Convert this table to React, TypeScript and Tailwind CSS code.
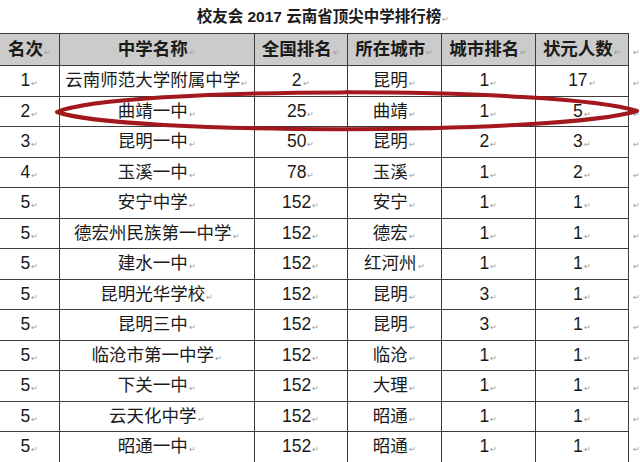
import React from 'react'

const rows: [string, string, string, string, string, string][] = [
  ['1', '云南师范大学附属中学', '2', '昆明', '1', '17'],
  ['2', '曲靖一中', '25', '曲靖', '1', '5'],
  ['3', '昆明一中', '50', '昆明', '2', '3'],
  ['4', '玉溪一中', '78', '玉溪', '1', '2'],
  ['5', '安宁中学', '152', '安宁', '1', '1'],
  ['5', '德宏州民族第一中学', '152', '德宏', '1', '1'],
  ['5', '建水一中', '152', '红河州', '1', '1'],
  ['5', '昆明光华学校', '152', '昆明', '3', '1'],
  ['5', '昆明三中', '152', '昆明', '3', '1'],
  ['5', '临沧市第一中学', '152', '临沧', '1', '1'],
  ['5', '下关一中', '152', '大理', '1', '1'],
  ['5', '云天化中学', '152', '昭通', '1', '1'],
  ['5', '昭通一中', '152', '昭通', '1', '1'],
]

const headers = ['名次', '中学名称', '全国排名', '所在城市', '城市排名', '状元人数']

function Mark() {
  return (
    <span className="ml-[1px] align-baseline text-[8px] leading-none text-[#9a9a9a] font-normal">↵</span>
  )
}

export default function App() {
  return (
    <div
      className="relative h-[462px] w-[640px] overflow-hidden bg-white text-[#1a1a1a]"
      style={{ fontFamily: '"Liberation Sans", "Noto Sans CJK SC", sans-serif' }}
    >
      <div className="flex h-[33px] items-center justify-center pl-[6px] pt-[1px] text-[15.5px] font-bold">
        <span>
          校友会 2017 云南省顶尖中学排行榜
          <Mark />
        </span>
      </div>

      <table className="table-fixed border-collapse text-[17.5px]">
        <colgroup>
          <col className="w-[60px]" />
          <col className="w-[197px]" />
          <col className="w-[94px]" />
          <col className="w-[95px]" />
          <col className="w-[95px]" />
          <col className="w-[94px]" />
          <col className="w-[5px]" />
        </colgroup>
        <thead>
          <tr className="h-[32px] font-bold">
            {headers.map((h, i) => (
              <th
                key={h}
                className={
                  i === 0
                    ? 'border border-l-0 border-[#3c3c3c] bg-[#cbcbcb] p-0 text-center font-bold leading-none'
                    : 'border border-[#3c3c3c] bg-[#cbcbcb] p-0 text-center font-bold leading-none'
                }
              >
                {h}
                <Mark />
              </th>
            ))}
            <td className="overflow-hidden p-0 pl-[3px] text-left">
              <Mark />
            </td>
          </tr>
        </thead>
        <tbody>
          {rows.map((r, ri) => (
            <tr key={ri} className="h-[30.5px]">
              {r.map((c, i) => (
                <td
                  key={i}
                  className={
                    i === 0
                      ? 'border border-l-0 border-[#3c3c3c] p-0 text-center leading-none'
                      : 'border border-[#3c3c3c] p-0 text-center leading-none'
                  }
                >
                  {c}
                  <Mark />
                </td>
              ))}
              <td className="overflow-hidden p-0 pl-[3px] text-left leading-none">
                <Mark />
              </td>
            </tr>
          ))}
        </tbody>
      </table>

      <svg
        className="pointer-events-none absolute left-0 top-0"
        width="640"
        height="462"
        viewBox="0 0 640 462"
      >
        <path
          d="M57,112 C120,86 560,86 637,111 C560,135 120,135 57,112 Z"
          fill="none"
          stroke="#a3181c"
          strokeWidth="4"
          strokeLinejoin="round"
        />
      </svg>
    </div>
  )
}
